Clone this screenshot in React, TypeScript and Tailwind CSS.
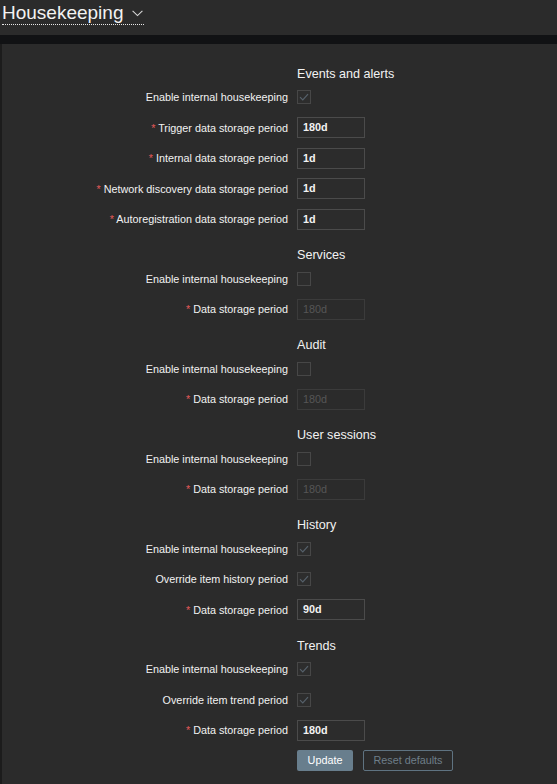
import React from "react";

type Row =
  | { kind: "heading"; text: string; first?: boolean }
  | { kind: "check"; label: string; checked: boolean; afterHeading?: boolean }
  | { kind: "input"; label: string; value: string; disabled?: boolean; afterHeading?: boolean };

const rows: Row[] = [
  { kind: "heading", text: "Events and alerts", first: true },
  { kind: "check", label: "Enable internal housekeeping", checked: true, afterHeading: true },
  { kind: "input", label: "Trigger data storage period", value: "180d" },
  { kind: "input", label: "Internal data storage period", value: "1d" },
  { kind: "input", label: "Network discovery data storage period", value: "1d" },
  { kind: "input", label: "Autoregistration data storage period", value: "1d" },
  { kind: "heading", text: "Services" },
  { kind: "check", label: "Enable internal housekeeping", checked: false, afterHeading: true },
  { kind: "input", label: "Data storage period", value: "180d", disabled: true },
  { kind: "heading", text: "Audit" },
  { kind: "check", label: "Enable internal housekeeping", checked: false, afterHeading: true },
  { kind: "input", label: "Data storage period", value: "180d", disabled: true },
  { kind: "heading", text: "User sessions" },
  { kind: "check", label: "Enable internal housekeeping", checked: false, afterHeading: true },
  { kind: "input", label: "Data storage period", value: "180d", disabled: true },
  { kind: "heading", text: "History" },
  { kind: "check", label: "Enable internal housekeeping", checked: true, afterHeading: true },
  { kind: "check", label: "Override item history period", checked: true },
  { kind: "input", label: "Data storage period", value: "90d" },
  { kind: "heading", text: "Trends" },
  { kind: "check", label: "Enable internal housekeeping", checked: true, afterHeading: true },
  { kind: "check", label: "Override item trend period", checked: true },
  { kind: "input", label: "Data storage period", value: "180d" },
];

function Checkbox({ checked }: { checked: boolean }) {
  return (
    <span className="flex h-[14px] w-[14px] items-center justify-center border border-[#474747] bg-[#2d2d2d]">
      {checked && (
        <svg width="10" height="8" viewBox="0 0 10 8" fill="none">
          <path d="M1 4.2 L3.8 7 L9 1.2" stroke="#56616b" strokeWidth="1.2" />
        </svg>
      )}
    </span>
  );
}

function FormRow({ row }: { row: Row }) {
  if (row.kind === "heading") {
    return (
      <div className={`flex h-[19px] items-center ${row.first ? "" : "mt-[16.5px]"}`}>
        <div className="w-[286px]" />
        <div className="ml-[9px] text-[12.6px] leading-[19px] text-[#f2f2f2]">{row.text}</div>
      </div>
    );
  }
  const required = row.kind === "input";
  return (
    <div className={`flex h-[21px] items-center ${row.afterHeading ? "mt-[3px]" : "mt-[9.5px]"}`}>
      <div className="w-[286px] text-right text-[10.8px] leading-[14px] text-[#f2f2f2]">
        {required && <span className="text-[#e45959]">* </span>}
        {row.label}
      </div>
      <div className="ml-[9px] flex items-center">
        {row.kind === "check" ? (
          <Checkbox checked={row.checked} />
        ) : (
          <div
            className={`flex h-[21px] w-[68px] items-center border px-[5px] text-[10.8px] ${
              row.disabled
                ? "border-[#3b3b3b] bg-[#2b2b2b] text-[#565656]"
                : "border-[#4b4b4b] bg-[#2c2c2c] font-bold text-[#f2f2f2]"
            }`}
          >
            {row.value}
          </div>
        )}
      </div>
    </div>
  );
}

export default function App() {
  return (
    <div className="flex h-[784px] flex-col overflow-hidden bg-[#111214] font-['Liberation_Sans',Arial,sans-serif]">
      <header className="h-[35px] bg-[#2b2b2b] pl-[2px] pt-[1px]">
        <span className="inline-flex items-center border-b border-dotted border-[#e8e8e8] pt-[1px] leading-[22px] text-[#f2f2f2]">
          <span className="text-[19px]">Housekeeping</span>
          <svg className="ml-[9px] mr-[1px]" width="11" height="7" viewBox="0 0 11 7" fill="none">
            <path d="M0.6 0.8 L5.5 5.6 L10.4 0.8" stroke="#d8d8d8" strokeWidth="1.1" />
          </svg>
        </span>
      </header>
      <div className="mt-[9px] flex-1 border-l-2 border-[#1c1c1c] bg-[#2b2b2b] pt-[20.5px]">
        {rows.map((r, i) => (
          <FormRow key={i} row={r} />
        ))}
        <div className="mt-[9.5px] flex">
          <div className="w-[286px]" />
          <div className="ml-[9px] flex gap-[10px]">
            <button className="h-[21px] w-[56px] rounded-[2px] bg-[#687e8d] text-[10.8px] text-white">
              Update
            </button>
            <button className="h-[21px] w-[90px] rounded-[2px] border border-[#5f7381] text-[10.8px] text-[#6e7e89]">
              Reset defaults
            </button>
          </div>
        </div>
      </div>
    </div>
  );
}
